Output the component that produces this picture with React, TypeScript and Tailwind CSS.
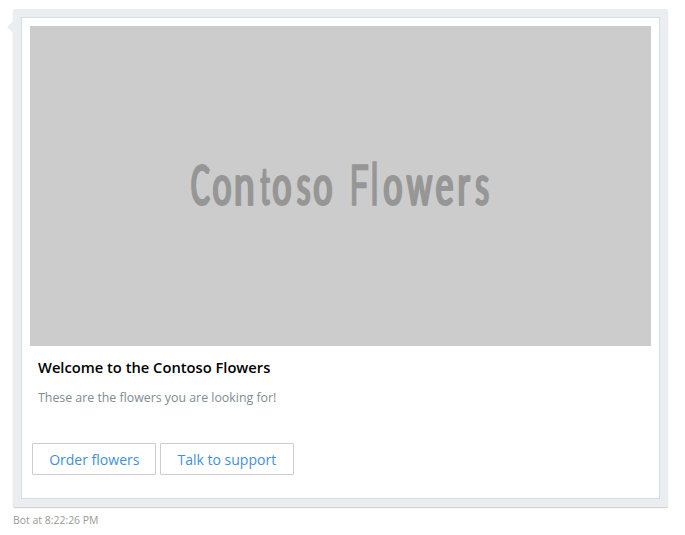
interface Letter {
  glyph: string;
  x: number;
  sx: number;
  sy?: number;
  solid?: boolean;
}

// Each letter of the wordmark: left origin, horizontal and vertical scale.
const letters: Letter[] = [
  { glyph: 'C', x: 190.3, sx: 0.5 },
  { glyph: 'o', x: 211.9, sx: 0.6 },
  { glyph: 'n', x: 233.4, sx: 0.66 },
  { glyph: 't', x: 260, sx: 0.44, sy: 0.93 },
  { glyph: 'o', x: 271.8, sx: 0.6 },
  { glyph: 's', x: 296.2, sx: 0.56 },
  { glyph: 'o', x: 312.8, sx: 0.6 },
  { glyph: 'F', x: 349.3, sx: 0.62, solid: true },
  { glyph: 'l', x: 370.2, sx: 0.64, sy: 1.05, solid: true },
  { glyph: 'o', x: 382.8, sx: 0.6 },
  { glyph: 'w', x: 406, sx: 0.58 },
  { glyph: 'e', x: 435.1, sx: 0.6 },
  { glyph: 'r', x: 457, sx: 0.59 },
  { glyph: 's', x: 474.7, sx: 0.56 },
];

function Banner() {
  return (
    <svg className="block h-[320px] w-[621px] bg-[#cccccc]" viewBox="30 26 621 320" role="img" aria-label="Contoso Flowers">
      {letters.map(({ glyph, x, sx, sy = 1, solid }, i) => (
        <g key={i}>
          <text
            id={`wordmark-${i}`}
            transform={`translate(${x} 205.3) scale(${sx} ${sy})`}
            className="fill-[#969696] stroke-[#969696] stroke-[1.6px] font-['Lato',sans-serif] text-[56px] font-normal"
          >
            {glyph}
          </text>
          {/* A slightly shifted second pass thickens the vertical stems only. */}
          {!solid && <use href={`#wordmark-${i}`} x="1.2" />}
        </g>
      ))}
    </svg>
  );
}

function ActionButton({ label, className }: { label: string; className: string }) {
  return (
    <button className={`flex h-8 items-center justify-center rounded-[1px] border border-[#cccccc] bg-white text-[15px] whitespace-nowrap text-[#3f90d9] ${className}`}>
      <span className="inline-block scale-x-[0.935]">{label}</span>
    </button>
  );
}

export default function App() {
  return (
    <main className="h-[535px] w-[685px] overflow-hidden bg-white pt-[9px] pl-[13px] font-['Open_Sans','Noto_Sans',sans-serif]">
      <section className="relative h-[498px] w-[655px] rounded-[2px] bg-[#eaeef1] p-2 shadow-[0_1px_1px_rgba(0,0,0,0.2)]">
        <svg className="absolute top-3 -left-[6px] h-3 w-[6px]" viewBox="0 0 6 12">
          <path d="M6 0L0 6L6 12Z" fill="#eaeef1" />
        </svg>
        <article className="h-[482px] w-[639px] border border-[#d2dde5] bg-white p-2">
          <Banner />
          <h1 className="mt-[10px] ml-2 h-[22px] origin-left scale-x-[0.98] text-[15px] leading-[22px] font-semibold whitespace-nowrap text-black">
            Welcome to the Contoso Flowers
          </h1>
          <p className="mt-[9px] ml-2 h-5 origin-left scale-x-[0.95] text-[13px] leading-5 whitespace-nowrap text-[#808c95]">
            These are the flowers you are looking for!
          </p>
          <div className="mt-9 ml-[2px] flex gap-1">
            <ActionButton label="Order flowers" className="w-[124px]" />
            <ActionButton label="Talk to support" className="w-[134px]" />
          </div>
        </article>
      </section>
      <footer className="mt-[5px] origin-left scale-x-[0.95] text-[11px] leading-4 text-[#999999]">Bot at 8:22:26 PM</footer>
    </main>
  );
}
